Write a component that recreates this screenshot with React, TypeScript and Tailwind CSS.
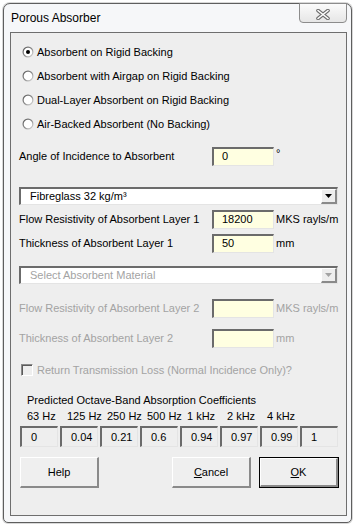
import React from "react";

const sunken =
  "border-t-2 border-l-2 border-b border-r border-t-[#6b6b6b] border-l-[#6b6b6b] border-b-[#e4e4e4] border-r-[#e4e4e4]";
const raised =
  "border-t border-l border-b-2 border-r-2 border-t-[#ffffff] border-l-[#ffffff] border-b-[#8a8a8a] border-r-[#8a8a8a]";

function Radio({ checked, label }: { checked?: boolean; label: string }) {
  return (
    <div className="flex h-[24px] items-center pl-[11px]">
      <svg width="12" height="12" viewBox="0 0 12 12" className="shrink-0">
        <defs>
          <linearGradient id="rg" x1="0" y1="0" x2="1" y2="1">
            <stop offset="0" stopColor="#555555" />
            <stop offset="0.5" stopColor="#8a8a8a" />
            <stop offset="1" stopColor="#e8e8e8" />
          </linearGradient>
        </defs>
        <circle cx="6" cy="6" r="5.5" fill="url(#rg)" />
        <circle cx="6" cy="6" r="4.3" fill="#ffffff" />
        {checked && <circle cx="6" cy="6" r="2" fill="#000000" />}
      </svg>
      <span className="ml-[3px] whitespace-nowrap text-black">{label}</span>
    </div>
  );
}

function FieldRow({
  label,
  value,
  unit,
  disabled,
}: {
  label: string;
  value?: string;
  unit?: string;
  disabled?: boolean;
}) {
  return (
    <div className="flex h-[24px] items-center px-[8px]">
      <span className={`w-[193px] shrink-0 whitespace-nowrap ${disabled ? "text-[#a3a3a3]" : "text-black"}`}>{label}</span>
      <div className={`flex h-[19px] w-[62px] shrink-0 items-center bg-[#ffffe1] pl-[8px] text-black ${sunken}`}>
        {value}
      </div>
      {unit && (
        <span
          className={`ml-[2px] whitespace-nowrap ${disabled ? "text-[#a3a3a3]" : "text-black"} ${unit === "°" ? "-mt-[6px]" : ""}`}
        >
          {unit}
        </span>
      )}
    </div>
  );
}

function Dropdown({ text, disabled }: { text: string; disabled?: boolean }) {
  return (
    <div className={`mx-[8px] flex h-[18px] items-stretch bg-white ${sunken}`}>
      <div className={`flex flex-1 items-center pl-[9px] ${disabled ? "text-[#a3a3a3]" : "text-black"}`}>{text}</div>
      <div className={`flex w-[16px] items-center justify-center bg-[#eeeeee] ${raised}`}>
        <svg width="7" height="4" viewBox="0 0 7 4">
          <path d="M0 0 H7 L3.5 4 Z" fill={disabled ? "#a3a3a3" : "#000000"} />
        </svg>
      </div>
    </div>
  );
}

function Btn({ children, def, w }: { children: React.ReactNode; def?: boolean; w: string }) {
  return (
    <div className={`${w} h-[31px] ${def ? "border border-black" : ""}`}>
      <div className={`flex h-full w-full items-center justify-center bg-[#efefef] text-black ${raised}`}>
        {children}
      </div>
    </div>
  );
}

export default function App() {
  const freqs = ["63 Hz", "125 Hz", "250 Hz", "500 Hz", "1 kHz", "2 kHz", "4 kHz"];
  const vals = ["0", "0.04", "0.21", "0.6", "0.94", "0.97", "0.99", "1"];
  return (
    <div className="h-[525px] w-[357px] bg-white pl-[3px] pt-[3px] font-['Liberation_Sans',Arial,sans-serif] text-[11px] leading-none">
      <div className="h-[520px] w-[349px] rounded-t-[7px] rounded-b-[5px] border border-[#5e5e5e] bg-[#f6f7f9] shadow-[0_0_0_1px_#d8d8d8]">
        {/* title bar */}
        <div className="flex h-[28px] items-start justify-between">
          <span className="ml-[7px] mt-[8px] text-[12px] text-black">Porous Absorber</span>
          <div className="-mt-[1px] mr-[4px] flex h-[20px] w-[48px] items-center justify-center rounded-b-[4px] border border-[#8c8c8c] bg-gradient-to-b from-[#fbfbfb] to-[#e6e6e6]">
            <svg width="14" height="11" viewBox="0 0 14 11" className="mt-[2px]">
              <path d="M2 1.5 L12 9.5 M12 1.5 L2 9.5" stroke="#6d6d6d" strokeWidth="3.6" strokeLinecap="round" />
              <path d="M2 1.5 L12 9.5 M12 1.5 L2 9.5" stroke="#ffffff" strokeWidth="1.6" strokeLinecap="round" />
            </svg>
          </div>
        </div>
        {/* client area */}
        <div className="ml-[6px] flex h-[484px] w-[337px] flex-col border border-[#6e6e6e] bg-[#eeeeee] pt-[7px]">
          <Radio checked label="Absorbent on Rigid Backing" />
          <Radio label="Absorbent with Airgap on Rigid Backing" />
          <Radio label="Dual-Layer Absorbent on Rigid Backing" />
          <Radio label="Air-Backed Absorbent (No Backing)" />

          <div className="mt-[8px]">
            <FieldRow label="Angle of Incidence to Absorbent" value="0" unit="°" />
          </div>

          <div className="mt-[19px]">
            <Dropdown text="Fibreglass 32 kg/m³" />
          </div>
          <div className="mt-[2px]">
            <FieldRow label="Flow Resistivity of Absorbent Layer 1" value="18200" unit="MKS rayls/m" />
            <FieldRow label="Thickness of Absorbent Layer 1" value="50" unit="mm" />
          </div>

          <div className="mt-[11px]">
            <Dropdown text="Select Absorbent Material" disabled />
          </div>
          <div className="mt-[12px]">
            <FieldRow label="Flow Resistivity of Absorbent Layer 2" unit="MKS rayls/m" disabled />
          </div>
          <div className="mt-[6px]">
            <FieldRow label="Thickness of Absorbent Layer 2" unit="mm" disabled />
          </div>

          <div className="mt-[8px] flex h-[24px] items-center pl-[10px]">
            <div className="h-[12px] w-[12px] shrink-0 border-t border-l border-b border-r border-t-[#8a8a8a] border-l-[#8a8a8a] border-b-[#ffffff] border-r-[#ffffff] shadow-[inset_1px_1px_0_#5a5a5a]" />
            <span className="ml-[4px] whitespace-nowrap text-[#a3a3a3]">Return Transmission Loss (Normal Incidence Only)?</span>
          </div>

          <div className="mt-[10px] flex h-[16px] items-center whitespace-nowrap pl-[16px] text-black">
            Predicted Octave-Band Absorption Coefficients
          </div>
          <div className="flex h-[16px] items-center pl-[9px] text-black">
            {freqs.map((f) => (
              <div key={f} className="w-[40px] shrink-0 whitespace-nowrap pl-[7px]">
                {f}
              </div>
            ))}
          </div>
          <div className="mt-[2px] flex h-[21px] gap-[2px] pl-[9px]">
            {vals.map((v, i) => (
              <div
                key={i}
                className={`flex h-full w-[38px] shrink-0 items-center bg-[#eeeeee] pl-[9px] text-black ${sunken}`}
              >
                {v}
              </div>
            ))}
          </div>

          <div className="mt-[10px] flex justify-between pl-[9px] pr-[7px]">
            <Btn w="w-[79px]">Help</Btn>
            <div className="flex gap-[8px]">
              <Btn w="w-[79px]">
                <span>
                  <span className="underline">C</span>ancel
                </span>
              </Btn>
              <Btn w="w-[80px]" def>
                <span>
                  <span className="underline">O</span>K
                </span>
              </Btn>
            </div>
          </div>
        </div>
      </div>
    </div>
  );
}
